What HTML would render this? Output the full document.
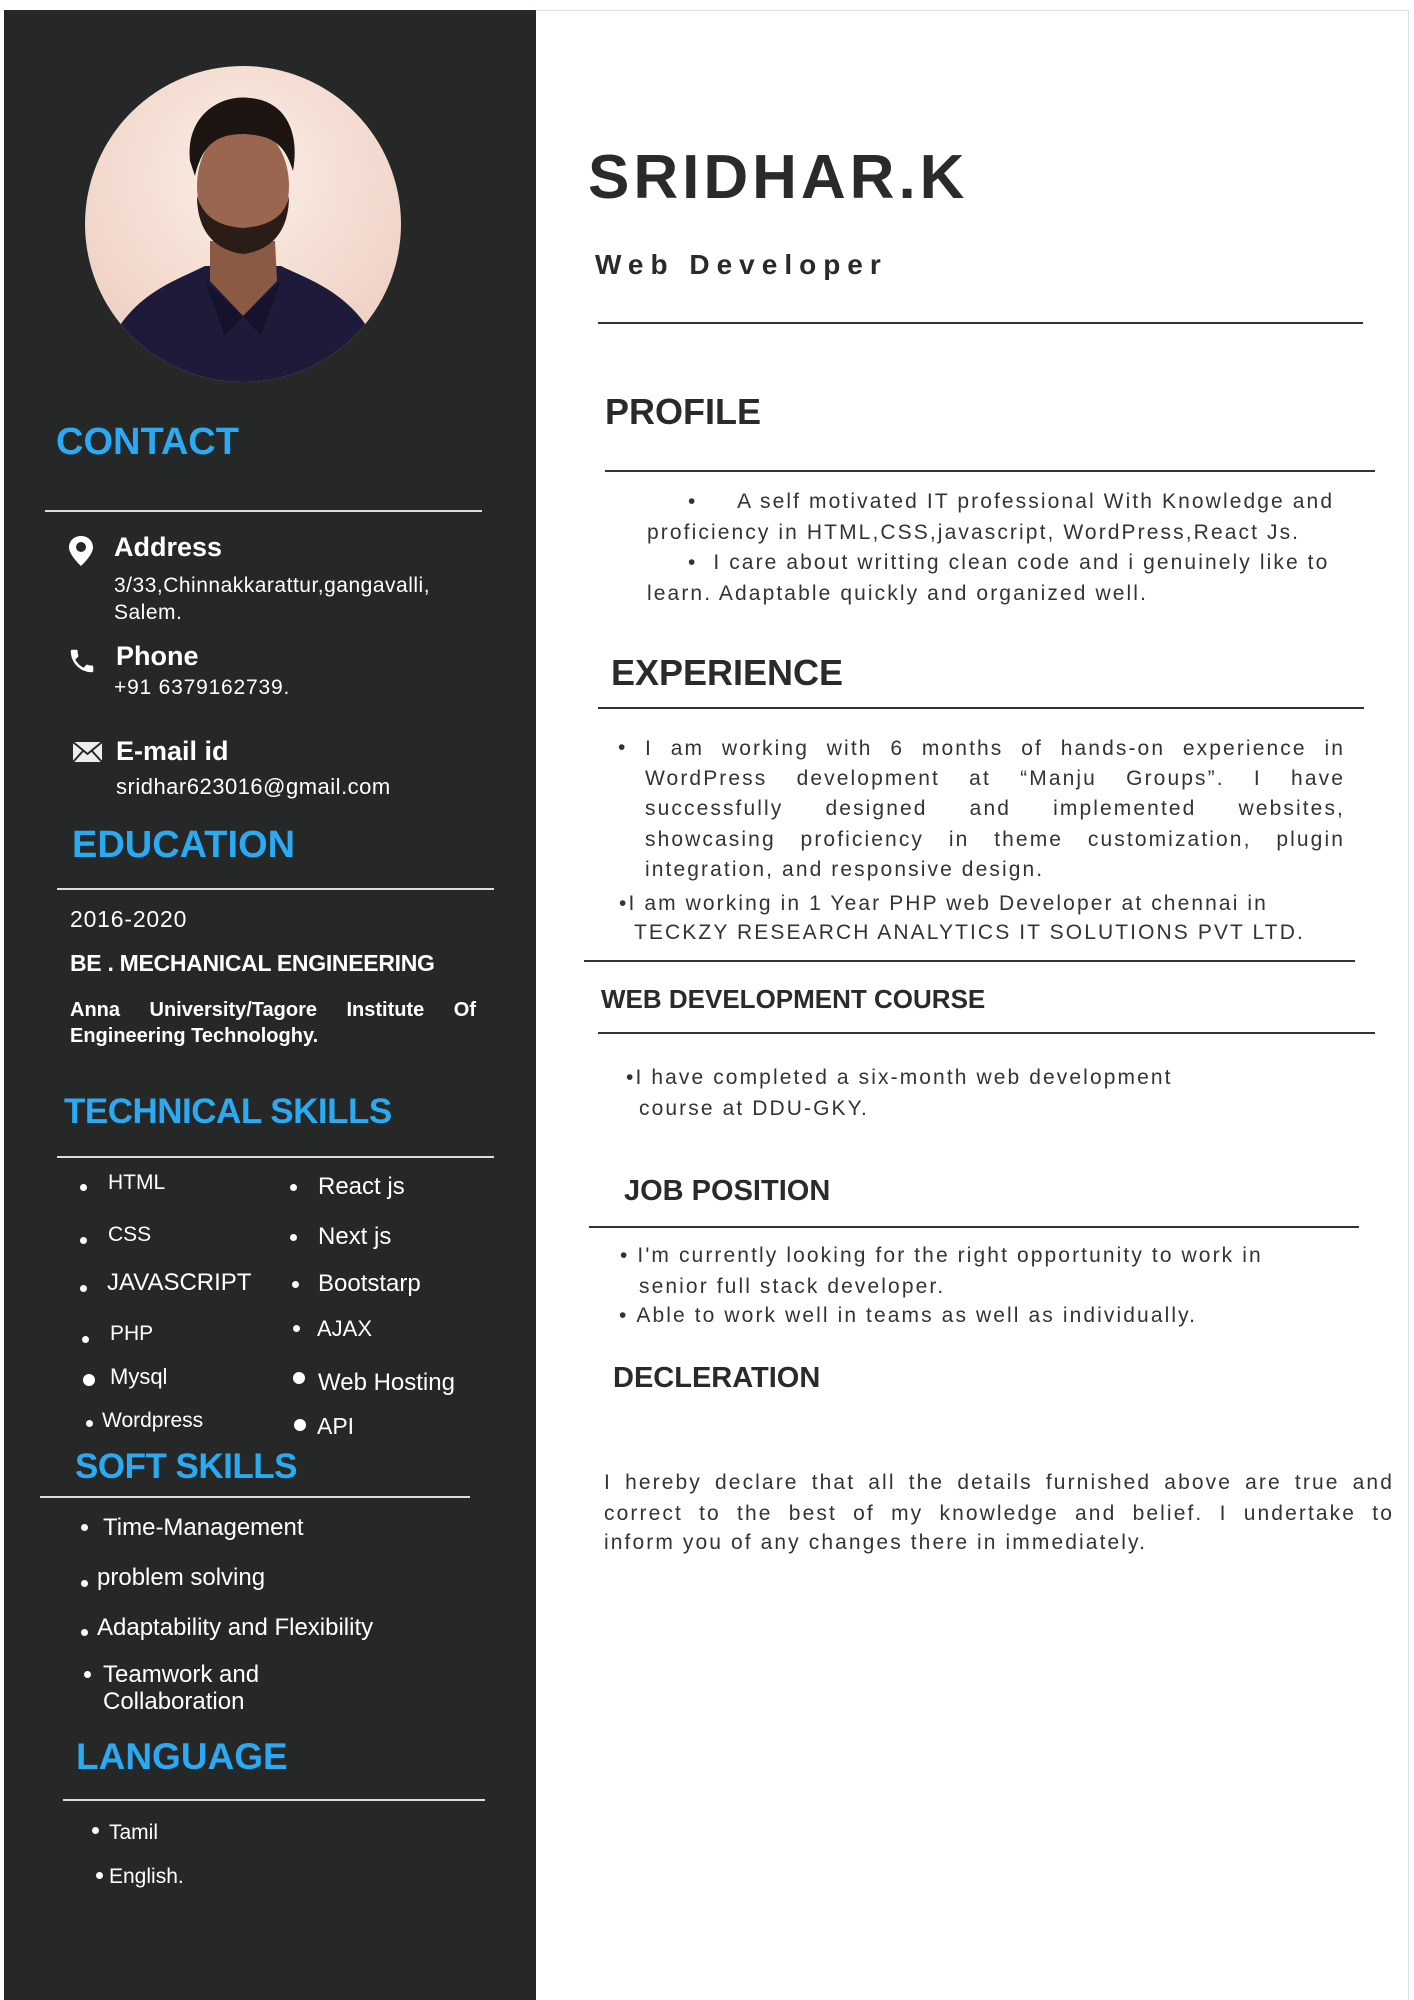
<!DOCTYPE html>
<html><head><meta charset="utf-8"><style>
*{margin:0;padding:0;box-sizing:border-box}
body{width:1414px;height:2000px;background:#fff;position:relative;overflow:hidden;font-family:"Liberation Sans",sans-serif}
.t{position:absolute;white-space:nowrap;line-height:1}
.side{position:absolute;left:4px;top:10px;width:532px;height:1990px;background:#262828}
.w{color:#fff}
.b{color:#2aaaf2;font-weight:bold;font-size:38px}
.hl{position:absolute;height:2px;background:#ddd}
.dl{position:absolute;height:2px;background:#333}
.r{color:#333;font-size:21px;letter-spacing:2.1px}
.j{text-align:justify;text-align-last:justify}
.h{color:#2a2a2a;font-weight:bold}
.dot{position:absolute;width:7px;height:7px;border-radius:50%;background:#fff}
</style></head><body>
<div style="position:absolute;left:536px;top:10px;width:873px;height:1px;background:#ddd"></div>
<div style="position:absolute;left:1408px;top:10px;width:1px;height:1990px;background:#ddd"></div>
<div class="side"></div>
<svg style="position:absolute;left:85px;top:66px" width="316" height="316" viewBox="0 0 316 316">
<defs><clipPath id="c"><circle cx="158" cy="158" r="158"/></clipPath>
<radialGradient id="bg" cx="50%" cy="35%" r="60%"><stop offset="0" stop-color="#fbeee6"/><stop offset="1" stop-color="#f0d2c6"/></radialGradient></defs>
<g clip-path="url(#c)">
<rect width="316" height="316" fill="url(#bg)"/>
<path d="M20 290 C40 230 90 215 120 200 L196 200 C226 215 280 230 300 300 L300 320 L20 320Z" fill="#1e1b3a"/>
<path d="M125 175 L125 215 L158 250 L192 215 L190 175Z" fill="#8a5a44"/>
<ellipse cx="158" cy="120" rx="46" ry="62" fill="#9a6650"/>
<path d="M112 130 C112 170 135 185 158 188 C182 185 204 170 204 130 C200 150 185 160 158 162 C132 160 118 150 112 130Z" fill="#2a1d18"/>
<path d="M105 95 C100 50 135 28 165 32 C200 35 215 65 208 105 C200 80 190 70 160 68 C135 68 118 75 110 110Z" fill="#1c1512"/>
<path d="M120 215 L158 250 L140 270Z M196 215 L158 250 L176 270Z" fill="#15122c"/>
</g></svg>
<div class="t b" style="left:56px;top:423px">CONTACT</div>
<div class="hl" style="left:45px;top:510px;width:437px"></div>
<svg style="position:absolute;left:68px;top:535px" width="26" height="32" viewBox="0 0 26 32"><path d="M13 1C6 1 1 6 1 12.5C1 20 13 31 13 31S25 20 25 12.5C25 6 20 1 13 1ZM13 17a5 5 0 1 1 0-10a5 5 0 1 1 0 10Z" fill="#fff"/></svg>
<div class="t w" style="left:114px;top:534px;font-size:27px;font-weight:bold">Address</div>
<div class="t w" style="left:114px;top:575px;font-size:21px;letter-spacing:.5px">3/33,Chinnakkarattur,gangavalli,</div>
<div class="t w" style="left:114px;top:602px;font-size:21px;letter-spacing:.5px">Salem.</div>
<svg style="position:absolute;left:67px;top:646px" width="30" height="30" viewBox="0 0 24 24"><path d="M6.6 10.8c1.4 2.8 3.8 5.1 6.6 6.6l2.2-2.2c.3-.3.7-.4 1-.2 1.1.4 2.3.6 3.6.6.6 0 1 .4 1 1V20c0 .6-.4 1-1 1C10.6 21 3 13.4 3 4c0-.6.4-1 1-1h3.5c.6 0 1 .4 1 1 0 1.3.2 2.5.6 3.6.1.3 0 .7-.2 1z" fill="#fff"/></svg>
<div class="t w" style="left:116px;top:643px;font-size:27px;font-weight:bold">Phone</div>
<div class="t w" style="left:114px;top:677px;font-size:21px;letter-spacing:.8px">+91 6379162739.</div>
<svg style="position:absolute;left:72px;top:741px" width="31" height="22" viewBox="0 0 31 22"><rect x="1" y="1" width="29" height="20" fill="#eee"/><path d="M1 1L15.5 13L30 1M1 21L11 10M30 21L20 10" stroke="#262828" stroke-width="2" fill="none"/></svg>
<div class="t w" style="left:116px;top:738px;font-size:27px;font-weight:bold">E-mail id</div>
<div class="t w" style="left:116px;top:776px;font-size:22px;letter-spacing:.5px">sridhar623016@gmail.com</div>
<div class="t b" style="left:72px;top:826px">EDUCATION</div>
<div class="hl" style="left:57px;top:888px;width:437px"></div>
<div class="t w" style="left:70px;top:908px;font-size:23px;letter-spacing:.8px">2016-2020</div>
<div class="t w" style="left:70px;top:952px;font-size:23px;font-weight:bold;letter-spacing:-.3px">BE . MECHANICAL ENGINEERING</div>
<div class="t w j" style="left:70px;top:1000px;width:406px;font-size:20px;font-weight:bold">Anna University/Tagore Institute Of</div>
<div class="t w" style="left:70px;top:1026px;font-size:20px;font-weight:bold">Engineering Technologhy.</div>
<div class="t b" style="left:64px;top:1094px;font-size:35px;letter-spacing:-.5px">TECHNICAL SKILLS</div>
<div class="hl" style="left:57px;top:1156px;width:437px"></div>
<div class="dot" style="left:80px;top:1184px"></div><div class="t w" style="left:108px;top:1172px;font-size:21px">HTML</div>
<div class="dot" style="left:80px;top:1237px"></div><div class="t w" style="left:108px;top:1224px;font-size:21px">CSS</div>
<div class="dot" style="left:80px;top:1285px"></div><div class="t w" style="left:107px;top:1271px;font-size:24px">JAVASCRIPT</div>
<div class="dot" style="left:82px;top:1336px"></div><div class="t w" style="left:110px;top:1323px;font-size:21px">PHP</div>
<div class="dot" style="left:83px;top:1374px;width:12px;height:12px"></div><div class="t w" style="left:110px;top:1366px;font-size:22px">Mysql</div>
<div class="dot" style="left:86px;top:1420px"></div><div class="t w" style="left:102px;top:1410px;font-size:21px">Wordpress</div>
<div class="dot" style="left:290px;top:1184px"></div><div class="t w" style="left:318px;top:1175px;font-size:24px">React js</div>
<div class="dot" style="left:290px;top:1234px"></div><div class="t w" style="left:318px;top:1225px;font-size:24px">Next js</div>
<div class="dot" style="left:292px;top:1281px"></div><div class="t w" style="left:318px;top:1272px;font-size:24px">Bootstarp</div>
<div class="dot" style="left:293px;top:1325px"></div><div class="t w" style="left:317px;top:1318px;font-size:22px">AJAX</div>
<div class="dot" style="left:293px;top:1372px;width:12px;height:12px"></div><div class="t w" style="left:318px;top:1371px;font-size:24px">Web Hosting</div>
<div class="dot" style="left:294px;top:1419px;width:12px;height:12px"></div><div class="t w" style="left:317px;top:1415px;font-size:23px">API</div>
<div class="t b" style="left:75px;top:1449px;font-size:35px;letter-spacing:-.5px">SOFT SKILLS</div>
<div class="hl" style="left:40px;top:1496px;width:430px"></div>
<div class="dot" style="left:81px;top:1524px"></div><div class="t w" style="left:103px;top:1516px;font-size:24px">Time-Management</div>
<div class="dot" style="left:81px;top:1580px"></div><div class="t w" style="left:97px;top:1566px;font-size:24px">problem solving</div>
<div class="dot" style="left:81px;top:1629px"></div><div class="t w" style="left:97px;top:1616px;font-size:24px">Adaptability and Flexibility</div>
<div class="dot" style="left:84px;top:1671px"></div><div class="t w" style="left:103px;top:1663px;font-size:24px">Teamwork and</div>
<div class="t w" style="left:103px;top:1690px;font-size:24px">Collaboration</div>
<div class="t b" style="left:76px;top:1738px;font-size:37px">LANGUAGE</div>
<div class="hl" style="left:63px;top:1799px;width:422px"></div>
<div class="dot" style="left:92px;top:1827px"></div><div class="t w" style="left:109px;top:1822px;font-size:21px">Tamil</div>
<div class="dot" style="left:96px;top:1872px"></div><div class="t w" style="left:109px;top:1866px;font-size:21px">English.</div>

<div class="t h" style="left:588px;top:147px;font-size:62px;letter-spacing:4px">SRIDHAR.K</div>
<div class="t h" style="left:595px;top:251px;font-size:28px;letter-spacing:7px">Web Developer</div>
<div class="dl" style="left:598px;top:322px;width:765px"></div>
<div class="t h" style="left:605px;top:394px;font-size:36px">PROFILE</div>
<div class="dl" style="left:605px;top:470px;width:770px"></div>
<div class="t r" style="left:688px;top:491px">•&nbsp;&nbsp;&nbsp;&nbsp;&nbsp;A self motivated IT professional With Knowledge and</div>
<div class="t r" style="left:647px;top:522px">proficiency in HTML,CSS,javascript, WordPress,React Js.</div>
<div class="t r" style="left:688px;top:552px">•&nbsp;&nbsp;I care about writting clean code and i genuinely like to</div>
<div class="t r" style="left:647px;top:583px">learn. Adaptable quickly and organized well.</div>
<div class="t h" style="left:611px;top:655px;font-size:36px">EXPERIENCE</div>
<div class="dl" style="left:598px;top:707px;width:766px"></div>
<div class="t r" style="left:618px;top:737px">•</div>
<div class="t r j" style="left:645px;top:738px;width:700px">I am working with 6 months of hands-on experience in</div>
<div class="t r j" style="left:645px;top:768px;width:700px">WordPress development at “Manju Groups”. I have</div>
<div class="t r j" style="left:645px;top:798px;width:700px">successfully designed and implemented websites,</div>
<div class="t r j" style="left:645px;top:829px;width:700px">showcasing proficiency in theme customization, plugin</div>
<div class="t r" style="left:645px;top:859px">integration, and responsive design.</div>
<div class="t r" style="left:619px;top:893px">•I am working in 1 Year PHP web Developer at chennai in</div>
<div class="t r" style="left:634px;top:922px">TECKZY RESEARCH ANALYTICS IT SOLUTIONS PVT LTD.</div>
<div class="dl" style="left:584px;top:960px;width:771px"></div>
<div class="t h" style="left:601px;top:986px;font-size:26px">WEB DEVELOPMENT COURSE</div>
<div class="dl" style="left:598px;top:1032px;width:777px"></div>
<div class="t r" style="left:626px;top:1067px">•I have completed a six-month web development</div>
<div class="t r" style="left:639px;top:1098px">course at DDU-GKY.</div>
<div class="t h" style="left:624px;top:1177px;font-size:29px">JOB POSITION</div>
<div class="dl" style="left:589px;top:1226px;width:770px"></div>
<div class="t r" style="left:620px;top:1245px">•&nbsp;I'm currently looking for the right opportunity to work in</div>
<div class="t r" style="left:639px;top:1276px">senior full stack developer.</div>
<div class="t r" style="left:619px;top:1305px">•&nbsp;Able to work well in teams as well as individually.</div>
<div class="t h" style="left:613px;top:1364px;font-size:29px">DECLERATION</div>
<div class="t r j" style="left:604px;top:1472px;width:790px">I hereby declare that all the details furnished above are true and</div>
<div class="t r j" style="left:604px;top:1503px;width:790px">correct to the best of my knowledge and belief. I undertake to</div>
<div class="t r" style="left:604px;top:1532px">inform you of any changes there in immediately.</div>
</body></html>
